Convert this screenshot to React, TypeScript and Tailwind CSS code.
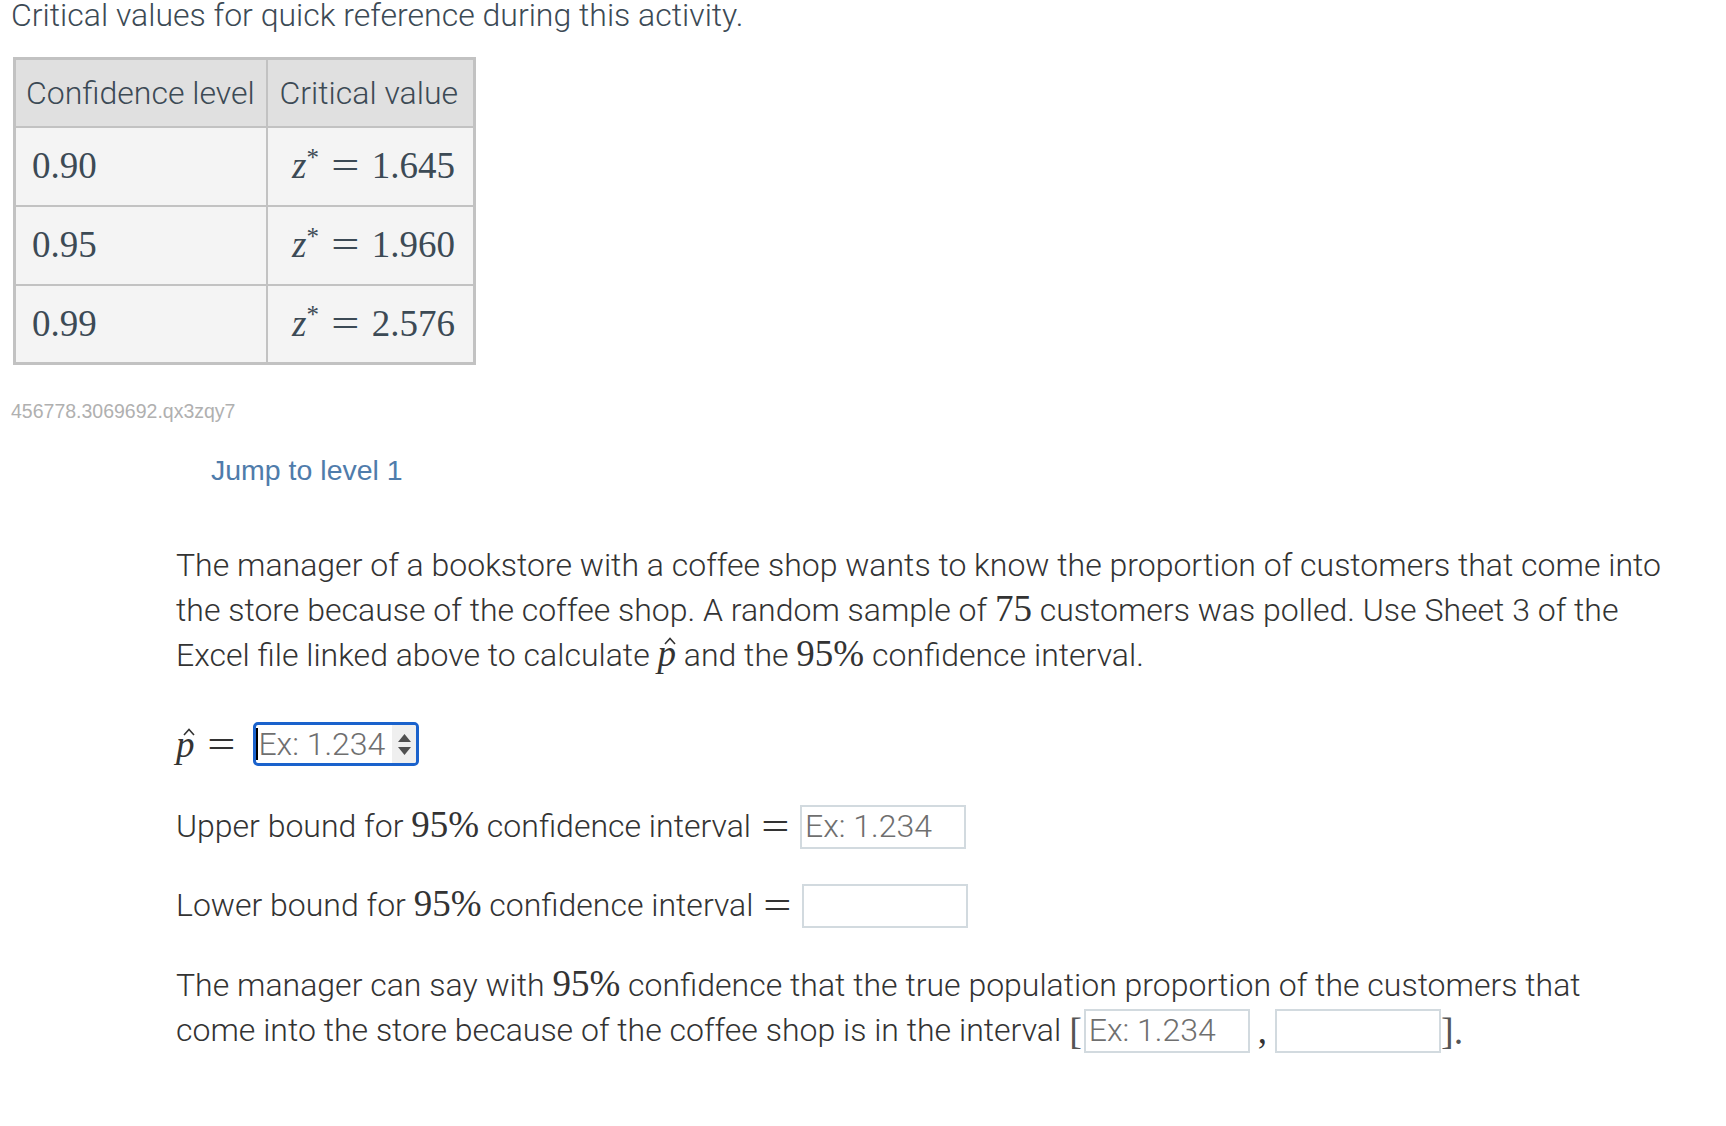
import React from "react";

function Num({ children }: { children: React.ReactNode }) {
  return <span className="font-['Liberation_Serif',serif] text-[37px] leading-none">{children}</span>;
}

function Eq({ className = "" }: { className?: string }) {
  return (
    <span className={"inline-block scale-x-[1.35] font-['Liberation_Serif',serif] text-[37px] leading-none " + className}>
      =
    </span>
  );
}

function PHat() {
  return (
    <span className="relative inline-block font-['Liberation_Serif',serif] text-[37px] italic leading-none">
      p
      <svg className="absolute left-[7px] top-[2px]" width="12" height="8" viewBox="0 0 12 8">
        <path d="M1 7L6 1.5L11 7" fill="none" stroke="#333" strokeWidth="1.6" />
      </svg>
    </span>
  );
}

function Field({ placeholder, className = "" }: { placeholder?: string; className?: string }) {
  return (
    <input
      readOnly
      placeholder={placeholder}
      className={
        "h-[44px] w-[166px] border-2 border-[#d2dadf] bg-white px-[3px] align-middle font-['Roboto',sans-serif] text-[32px] font-light text-[#333] outline-none placeholder:text-[#6f6f6f] " +
        className
      }
    />
  );
}

function FocusedField() {
  return (
    <span className="inline-flex h-[44px] w-[166px] items-stretch overflow-hidden rounded-[5px] border-[3px] border-[#1a62cc] bg-white align-middle">
      <span className="flex flex-1 items-center">
        <span className="h-[32px] w-[2px] bg-black" />
        <span className="font-['Roboto',sans-serif] text-[32px] font-light text-[#6f6f6f]">Ex: 1.234</span>
      </span>
      <span className="flex w-[24px] flex-col items-center justify-center gap-[5px] bg-[#efefef]">
        <svg width="13" height="8" viewBox="0 0 13 8"><path d="M6.5 0L13 8H0z" fill="#505050" /></svg>
        <svg width="13" height="8" viewBox="0 0 13 8"><path d="M0 0h13L6.5 8z" fill="#505050" /></svg>
      </span>
    </span>
  );
}

const rows = [
  ["0.90", "1.645"],
  ["0.95", "1.960"],
  ["0.99", "2.576"],
];

export default function App() {
  return (
    <div className="min-h-[1126px] bg-white pl-[11px] font-['Roboto',sans-serif] text-[#333]">
      <div className="text-[32px] font-light leading-[31px] text-[#3c4a55]">
        Critical values for quick reference during this activity.
      </div>

      <table className="mt-[26px] ml-[2px] border-collapse border-[3px] border-[#c2c2c2] text-[#3c4a55]">
        <thead>
          <tr className="h-[68px] bg-[#e0e0e0]">
            <th className="w-[252px] border-2 border-[#c2c2c2] pl-[10px] text-left text-[32px] font-light">
              Confidence level
            </th>
            <th className="w-[208px] border-2 border-[#c2c2c2] pl-[12px] text-left text-[32px] font-light">
              Critical value
            </th>
          </tr>
        </thead>
        <tbody>
          {rows.map(([c, v]) => (
            <tr key={c} className="h-[79px] bg-[#f4f4f4]">
              <td className="border-2 border-[#c2c2c2] pl-[16px]">
                <Num>{c}</Num>
              </td>
              <td className="border-2 border-[#c2c2c2] pr-[18px] text-right">
                <span className="font-['Liberation_Serif',serif] text-[37px] leading-none">
                  <span className="italic">z</span>
                  <sup className="text-[25px]">*</sup>
                  <Eq className="mx-[16px]" />
                  {v}
                </span>
              </td>
            </tr>
          ))}
        </tbody>
      </table>

      <div className="mt-[34px] font-['Liberation_Sans',sans-serif] text-[19.5px] leading-[24px] text-[#b0b0b0]">
        456778.3069692.qx3zqy7
      </div>

      <div className="mt-[31px] pl-[200px] font-['Liberation_Sans',sans-serif] text-[28.5px] leading-[32px] text-[#4f7cab]">
        Jump to level 1
      </div>

      <div className="mt-[57px] pl-[165px] text-[32px] font-light leading-[45px] text-[#333]">
        <p>
          <span className="block whitespace-nowrap">
            The manager of a bookstore with a coffee shop wants to know the proportion of customers that come into
          </span>
          <span className="block whitespace-nowrap">
            the store because of the coffee shop. A random sample of <Num>75</Num> customers was polled. Use Sheet 3 of the
          </span>
          <span className="block whitespace-nowrap">
            Excel file linked above to calculate <PHat /> and the <Num>95%</Num> confidence interval.
          </span>
        </p>

        <div className="mt-[44px] flex items-center">
          <PHat />
          <Eq className="ml-[16px] mr-[22px]" />
          <FocusedField />
        </div>

        <div className="mt-[38px] flex items-center">
          <span>
            Upper bound for <Num>95%</Num> confidence interval
          </span>
          <Eq className="mx-[14px]" />
          <Field placeholder="Ex: 1.234" />
        </div>

        <div className="mt-[34px] flex items-center">
          <span>
            Lower bound for <Num>95%</Num> confidence interval
          </span>
          <Eq className="mx-[14px]" />
          <Field />
        </div>

        <p className="mt-[35px]">
          <span className="block whitespace-nowrap">
            The manager can say with <Num>95%</Num> confidence that the true population proportion of the customers that
          </span>
          <span className="flex items-center whitespace-nowrap">
            come into the store because of the coffee shop is in the interval
            <span className="ml-[8px] mr-[2px] font-['Liberation_Serif',serif] text-[38px] font-light leading-none text-[#555]">[</span>
            <Field placeholder="Ex: 1.234" />
            <span className="mx-[8px] font-['Liberation_Serif',serif] text-[37px] leading-none">,</span>
            <Field />
            <span className="font-['Liberation_Serif',serif] text-[38px] leading-none text-[#555]">].</span>
          </span>
        </p>
      </div>
    </div>
  );
}
